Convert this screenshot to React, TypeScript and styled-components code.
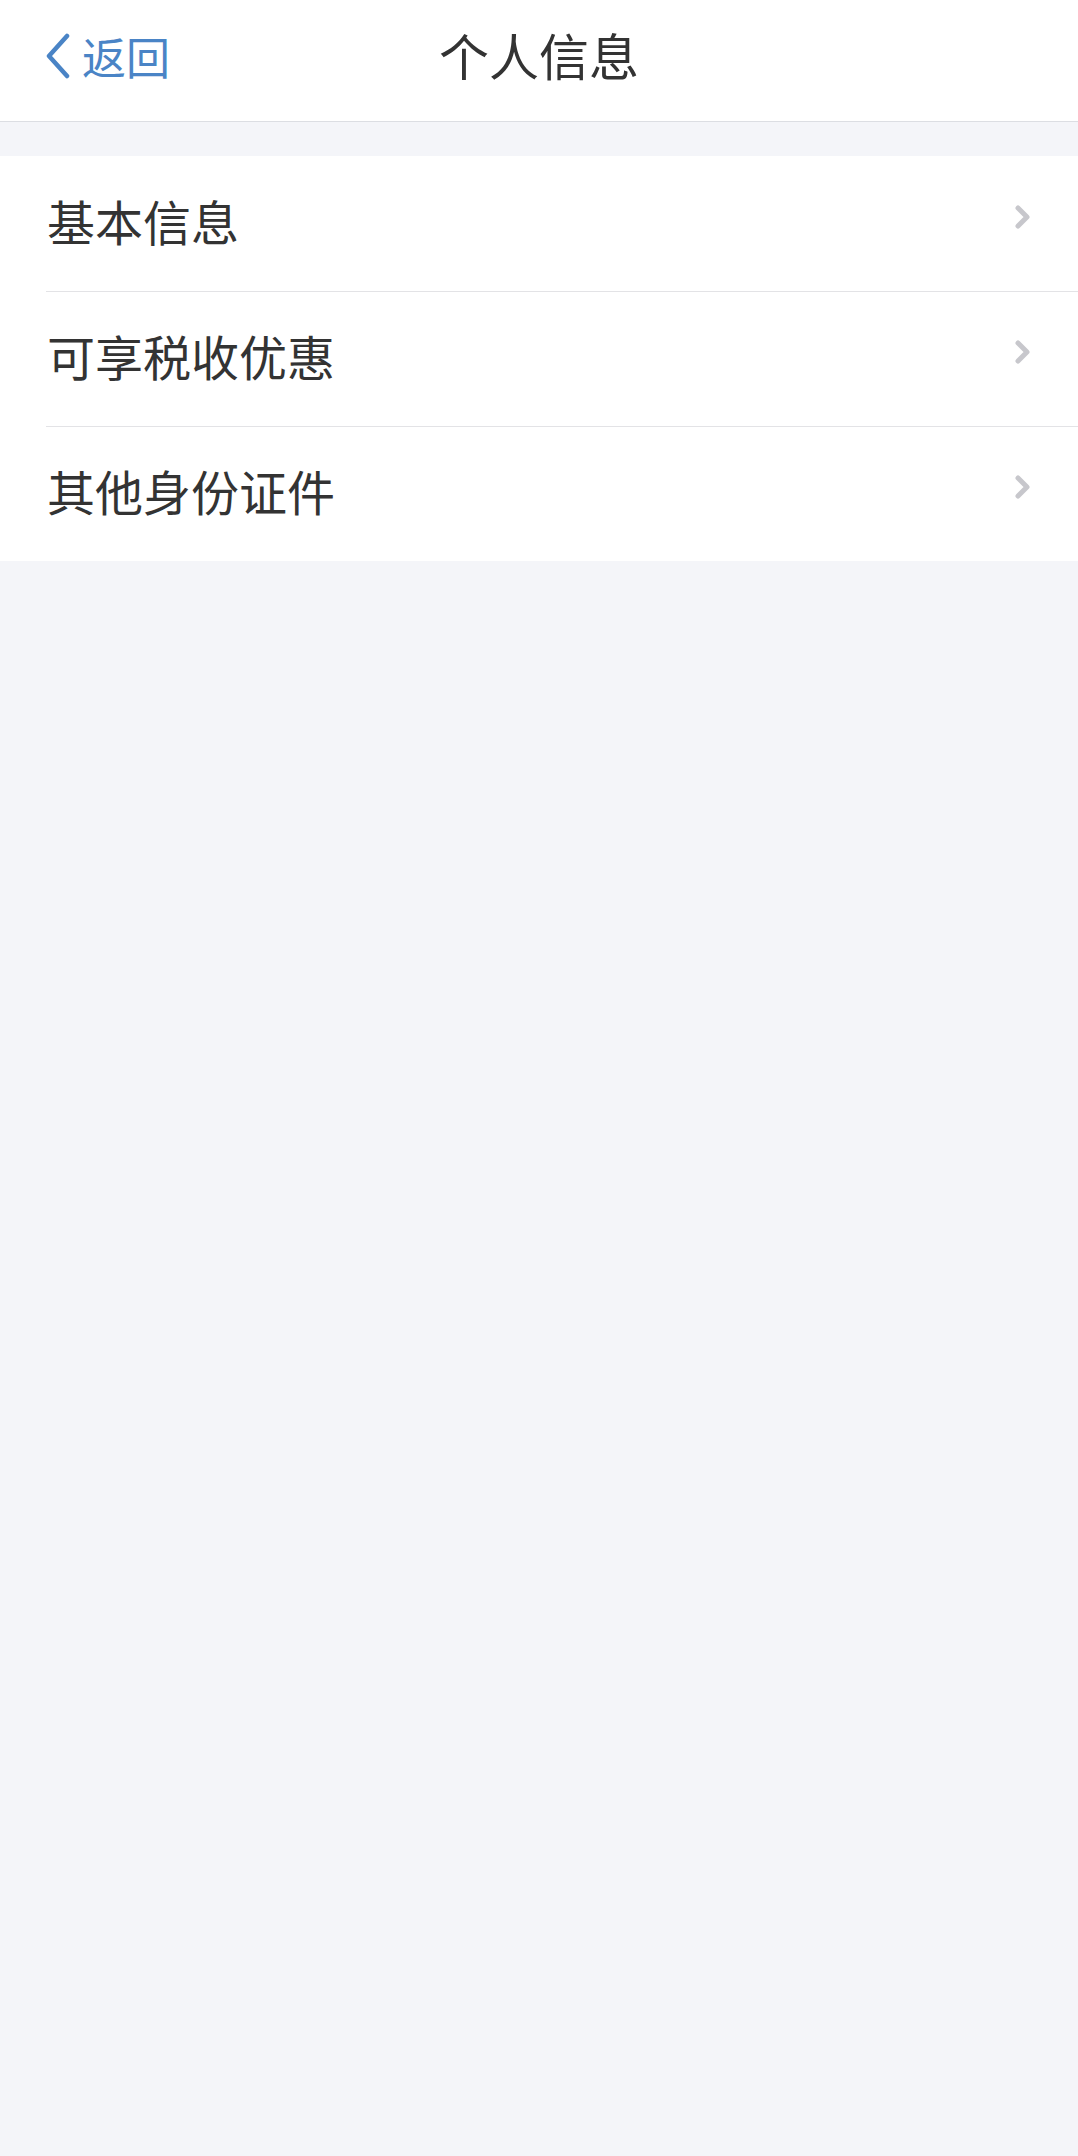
import React from "react";
import styled, { createGlobalStyle } from "styled-components";

const Global = createGlobalStyle`
  html, body { margin: 0; padding: 0; background: #f4f5f9; }
  body { font-family: "Noto Sans CJK SC", "Noto Sans", sans-serif; }
  #root { min-height: 2156px; background: #f4f5f9; }
`;

const Page = styled.div`
  display: flex;
  flex-direction: column;
  min-height: 2156px;
  background: #f4f5f9;
`;

const Header = styled.header`
  position: relative;
  height: 121px;
  background: #ffffff;
  border-bottom: 1px solid #dcdee3;
  display: flex;
  align-items: center;
  justify-content: center;
`;

const BackButton = styled.button`
  position: absolute;
  left: 44px;
  top: 0;
  bottom: 0;
  display: flex;
  align-items: center;
  gap: 10px;
  padding: 0 0 10px;
  border: none;
  background: none;
  color: #4a84c6;
  font-family: "Noto Sans CJK SC", sans-serif;
  font-size: 44px;
  line-height: 1;
  cursor: pointer;
`;

const Title = styled.h1`
  margin: 0;
  font-size: 50px;
  font-weight: 400;
  color: #333333;
  line-height: 1;
  padding-bottom: 14px;
`;

const List = styled.ul`
  list-style: none;
  margin: 34px 0 0;
  padding: 0 0 0 46px;
  background: #ffffff;
`;

const Row = styled.li<{ $first?: boolean }>`
  height: 135px;
  box-sizing: border-box;
  display: flex;
  align-items: center;
  justify-content: space-between;
  padding-right: 46px;
  border-top: ${(p) => (p.$first ? "none" : "1px solid #e3e3e6")};
`;

const Label = styled.span`
  font-size: 48px;
  color: #333333;
  line-height: 1;
  margin-left: 1px;
  padding-bottom: 8px;
`;

const Arrow = styled.span`
  display: flex;
  padding-bottom: 14px;
`;

const Back = () => (
  <svg width="28" height="46" viewBox="0 0 28 46" fill="none">
    <path d="M23 3 L5 23 L23 43" stroke="#4a84c6" strokeWidth="4.5" strokeLinecap="round" strokeLinejoin="round" />
  </svg>
);

const Chevron = () => (
  <svg width="18" height="24" viewBox="0 0 18 24" fill="none">
    <path d="M4 3 L13 12 L4 21" stroke="#c7c7cc" strokeWidth="5" strokeLinecap="round" strokeLinejoin="round" />
  </svg>
);

const items = ["基本信息", "可享税收优惠", "其他身份证件"];

export default function App() {
  return (
    <Page>
      <Global />
      <Header>
        <BackButton>
          <Back />
          <span>返回</span>
        </BackButton>
        <Title>个人信息</Title>
      </Header>
      <List>
        {items.map((t, i) => (
          <Row key={t} $first={i === 0}>
            <Label>{t}</Label>
            <Arrow>
              <Chevron />
            </Arrow>
          </Row>
        ))}
      </List>
    </Page>
  );
}
